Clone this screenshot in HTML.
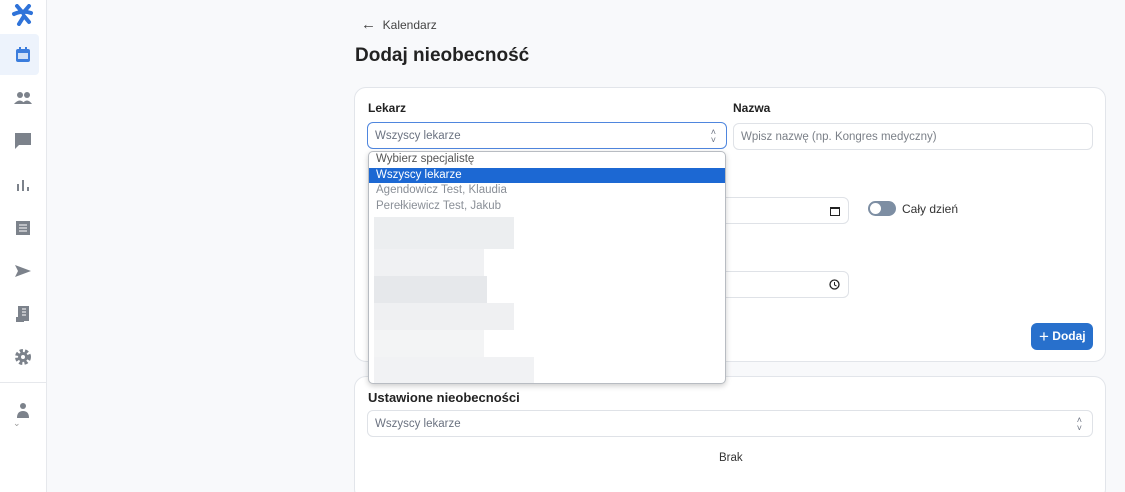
<!DOCTYPE html><html style="width:1125px;height:492px;overflow:hidden"><head><style>
*{box-sizing:border-box;margin:0;padding:0}
body{width:1125px;height:492px;overflow:hidden;background:#f8f9fb;font-family:"Liberation Sans",sans-serif;position:relative;color:#222}
.sb{position:absolute;left:0;top:0;width:47px;height:492px;background:#fff;border-right:1px solid #e6e8ec}
.ic{position:absolute;left:8px;width:30px;height:30px;display:flex;align-items:center;justify-content:center}
.card{position:absolute;left:354px;width:752px;background:#fff;border:1px solid #e2e5ea;border-radius:12px}
.lbl{position:absolute;font-size:12px;font-weight:bold;color:#222}
.inp{position:absolute;height:27px;border:1px solid #dfe2e7;border-radius:6px;background:#fff;font-size:11.5px;color:#6b7280;padding:7px 7px}
.dd{position:absolute;left:368px;top:151px;width:358px;height:233px;background:#fff;border:1px solid #b8bcc2;border-radius:5px;box-shadow:0 2px 6px rgba(0,0,0,.2);font-size:11.5px;overflow:hidden}
.dd div.o{height:15.5px;line-height:15.5px;padding-left:7px;color:#8a8f97}
.bl{position:absolute;background:#e8eaed}
</style></head><body>
<div class="sb">
<div class="ic" style="top:0"><svg width="24" height="22" viewBox="0 0 24 22"><path d="M6 2 L12 9 L18 2" stroke="#2f73d9" stroke-width="4" fill="none" stroke-linecap="round"/><path d="M3 10 Q12 6 20 9 M8 20 L13 12 L18 18" stroke="#2f73d9" stroke-width="4" fill="none" stroke-linecap="round"/></svg></div>
<div style="position:absolute;left:0;top:34px;width:39px;height:41px;background:#edf3fc;border-radius:0 4px 4px 0"></div>
<div class="ic" style="top:40px"><svg width="16" height="16"><rect x="1" y="2" width="14" height="13" rx="2" fill="#3b7ddd"/><rect x="3" y="6" width="10" height="6" fill="#cfe0f7"/><rect x="4" y="0" width="2" height="4" fill="#3b7ddd"/><rect x="10" y="0" width="2" height="4" fill="#3b7ddd"/></svg></div>
<div class="ic" style="top:83px"><svg width="20" height="14"><circle cx="7" cy="4" r="3" fill="#7c828b"/><circle cx="14" cy="4" r="3" fill="#7c828b"/><path d="M1 13 Q7 6 12 13Z M9 13 Q14 6 19 13Z" fill="#7c828b"/></svg></div>
<div class="ic" style="top:126px"><svg width="18" height="18"><path d="M1 1h16v12H5l-4 4z" fill="#7c828b"/></svg></div>
<div class="ic" style="top:170px"><svg width="14" height="14"><rect x="1" y="6" width="2" height="7" fill="#7c828b"/><rect x="6" y="2" width="2" height="11" fill="#7c828b"/><rect x="11" y="9" width="2" height="4" fill="#7c828b"/></svg></div>
<div class="ic" style="top:213px"><svg width="16" height="16"><rect x="1" y="1" width="14" height="14" fill="#7c828b"/><path d="M4 5h8M4 8h8M4 11h8" stroke="#fff"/></svg></div>
<div class="ic" style="top:256px"><svg width="18" height="14"><path d="M1 1 L17 7 L1 13 L4 7Z" fill="#7c828b"/></svg></div>
<div class="ic" style="top:299px"><svg width="16" height="18"><rect x="3" y="1" width="11" height="15" fill="#7c828b"/><rect x="1" y="12" width="8" height="5" fill="#7c828b"/><path d="M7 4h4M7 7h4M7 10h4" stroke="#fff"/></svg></div>
<div class="ic" style="top:342px"><svg width="18" height="18"><circle cx="9" cy="9" r="6" fill="none" stroke="#7c828b" stroke-width="4" stroke-dasharray="3 2"/><circle cx="9" cy="9" r="5" fill="#7c828b"/><circle cx="9" cy="9" r="2" fill="#fff"/></svg></div>
<div style="position:absolute;left:0;top:382px;width:46px;border-top:1px solid #e6e8ec"></div>
<div class="ic" style="top:396px"><svg width="16" height="18"><circle cx="8" cy="4" r="3" fill="#7c828b"/><path d="M2 16 Q2 9 8 9 Q14 9 14 16Z" fill="#7c828b"/></svg></div>
<div style="position:absolute;left:13px;top:418px;font-size:9px;color:#999">⌄</div>
</div>
<div style="position:absolute;left:361px;top:16px;font-size:12px;color:#444"><span style="font-size:15px">←</span>&nbsp; Kalendarz</div>
<div style="position:absolute;left:355px;top:45px;font-size:19px;font-weight:bold;color:#222">Dodaj nieobecność</div>
<div class="card" style="top:87px;height:275px">
</div>
<div class="lbl" style="left:368px;top:101px">Lekarz</div>
<div class="lbl" style="left:733px;top:101px">Nazwa</div>
<div class="inp" style="left:367px;top:122px;width:360px;border:1.5px solid #4f86de">Wszyscy lekarze<span style="position:absolute;right:10px;top:5px;font-size:9px;line-height:8px">˄<br>˅</span></div>
<div class="inp" style="left:733px;top:123px;width:360px;color:#7b8088">Wpisz nazwę (np. Kongres medyczny)</div>
<div class="inp" style="left:700px;top:197px;width:149px"><svg style="position:absolute;right:8px;top:8px" width="10" height="10"><rect x="0.5" y="1.5" width="9" height="8" fill="none" stroke="#222"/><rect x="0" y="1" width="10" height="2" fill="#222"/></svg></div>
<div style="position:absolute;left:868px;top:201px;width:28px;height:15px;border-radius:8px;background:#7d8ea3"><div style="position:absolute;left:2px;top:2px;width:11px;height:11px;border-radius:50%;background:#fff"></div></div>
<div style="position:absolute;left:902px;top:202px;font-size:12px;color:#333">Cały dzień</div>
<div class="inp" style="left:700px;top:271px;width:149px"><svg style="position:absolute;right:8px;top:7px" width="11" height="11"><circle cx="5.5" cy="5.5" r="4.5" fill="none" stroke="#222" stroke-width="1.3"/><path d="M5.5 3v3l2 1" stroke="#222" fill="none"/></svg></div>
<div style="position:absolute;left:1031px;top:323px;width:62px;height:27px;background:#2870cc;border-radius:6px;color:#fff;font-size:12px;font-weight:bold;line-height:27px;padding-left:8px"><span style="font-weight:normal;font-size:17px;vertical-align:-2px">+</span> Dodaj</div>
<div class="card" style="top:376px;height:125px"></div>
<div class="lbl" style="left:368px;top:390px;font-size:13px">Ustawione nieobecności</div>
<div class="inp" style="left:367px;top:410px;width:726px">Wszyscy lekarze<span style="position:absolute;right:10px;top:5px;font-size:9px;line-height:8px">˄<br>˅</span></div>
<div style="position:absolute;left:719px;top:452px;font-size:11.5px;color:#333">Brak</div>
<div class="dd">
<div class="o" style="color:#555">Wybierz specjalistę</div>
<div class="o" style="background:#1c68d3;color:#fff">Wszyscy lekarze</div>
<div class="o">Agendowicz Test, Klaudia</div>
<div class="o">Perełkiewicz Test, Jakub</div>
<div class="bl" style="left:5px;top:65px;width:140px;height:32px;background:#eceef0"></div>
<div class="bl" style="left:5px;top:97px;width:110px;height:27px;background:#f0f1f3"></div>
<div class="bl" style="left:5px;top:124px;width:113px;height:27px;background:#e6e8eb"></div>
<div class="bl" style="left:5px;top:151px;width:140px;height:27px;background:#eff0f2"></div>
<div class="bl" style="left:5px;top:178px;width:110px;height:27px;background:#f3f4f5"></div>
<div class="bl" style="left:5px;top:205px;width:160px;height:28px;background:#f1f2f4"></div>
</div>
</body></html>
